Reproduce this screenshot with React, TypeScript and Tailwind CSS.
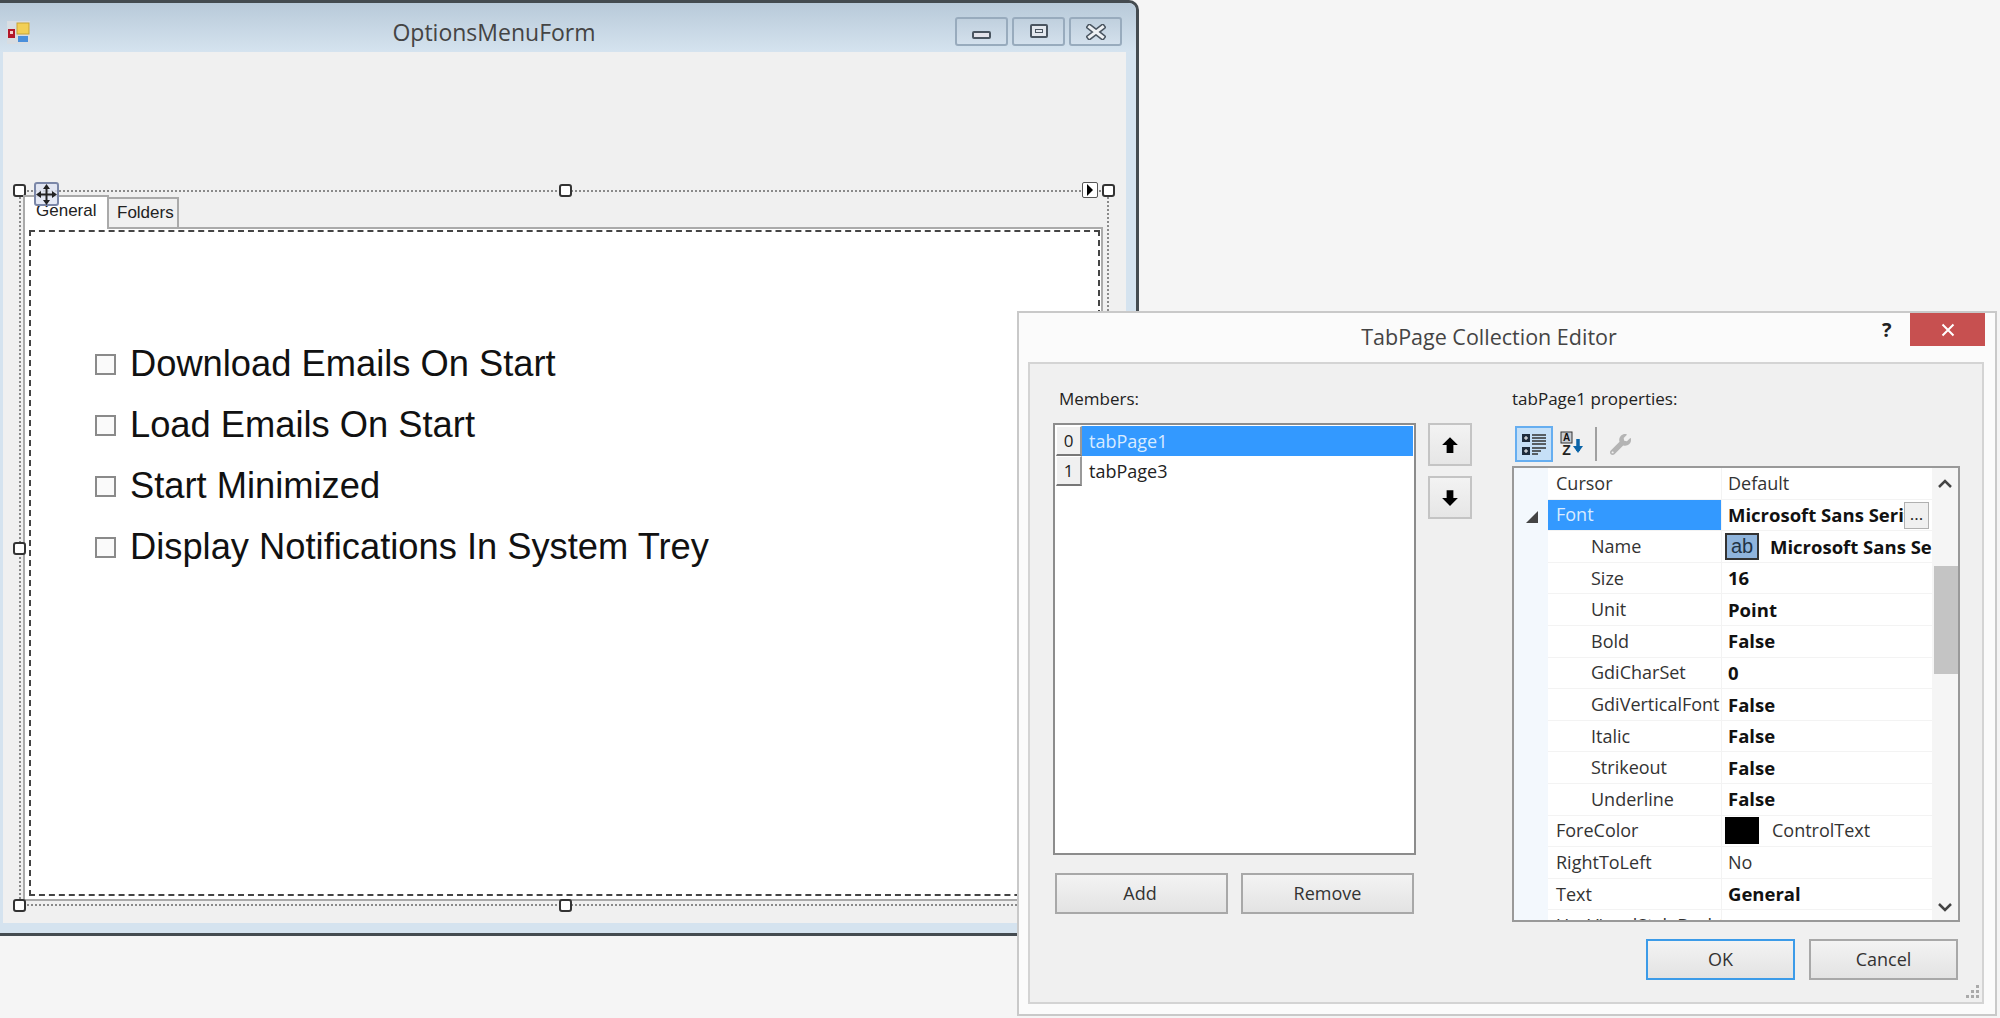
import { FaWrench } from 'react-icons/fa';

const checks = ['Download Emails On Start', 'Load Emails On Start', 'Start Minimized', 'Display Notifications In System Trey'];

type Prop = { name: string; value: string; indent?: boolean; bold?: boolean; selected?: boolean; swatch?: 'ab' | 'black' };

const props: Prop[] = [
  { name: 'Cursor', value: 'Default' },
  { name: 'Font', value: 'Microsoft Sans Serif', bold: true, selected: true },
  { name: 'Name', value: 'Microsoft Sans Serif', indent: true, bold: true, swatch: 'ab' },
  { name: 'Size', value: '16', indent: true, bold: true },
  { name: 'Unit', value: 'Point', indent: true, bold: true },
  { name: 'Bold', value: 'False', indent: true, bold: true },
  { name: 'GdiCharSet', value: '0', indent: true, bold: true },
  { name: 'GdiVerticalFont', value: 'False', indent: true, bold: true },
  { name: 'Italic', value: 'False', indent: true, bold: true },
  { name: 'Strikeout', value: 'False', indent: true, bold: true },
  { name: 'Underline', value: 'False', indent: true, bold: true },
  { name: 'ForeColor', value: 'ControlText', swatch: 'black' },
  { name: 'RightToLeft', value: 'No' },
  { name: 'Text', value: 'General', bold: true },
  { name: 'UseVisualStyleBackColor', value: 'True', bold: true },
];

const Handle = ({ className }: { className: string }) => (
  <div className={`absolute w-[13px] h-[13px] bg-white border-2 border-[#333] rounded-[3px] ${className}`} />
);

const CaptionButton = ({ children }: { children: React.ReactNode }) => (
  <div className="w-[53px] h-[29px] flex items-center justify-center rounded-[3px] border-2 border-[#98abbd] bg-gradient-to-b from-[#c0d0de] to-[#d3e0ec]">
    {children}
  </div>
);

const Checks = () => (
  <div className="flex flex-col pt-[102px] pl-[64px]">
    {checks.map((label) => (
      <div key={label} className="h-[61px] flex items-center gap-[14px]">
        <div className="w-[21px] h-[21px] border-2 border-[#8a8a8a] bg-[#fafafa]" />
        <span className="font-['Liberation_Sans',sans-serif] text-[36.3px] leading-none text-[#111]">{label}</span>
      </div>
    ))}
  </div>
);

const FormWindow = () => (
  <div className="absolute left-0 top-0 w-[1139px] h-[936px] flex flex-col bg-[#d5e3ef] border-t-[3px] border-r-[3px] border-b-[3px] border-[#444b50] rounded-tr-[10px]">
    {/* title bar */}
    <div className="h-[49px] shrink-0 relative flex items-center justify-center bg-gradient-to-b from-[#b8cad9] to-[#d5e3ef] rounded-tr-[8px]">
      <svg className="absolute left-[7px] top-[18px]" width="23" height="23" viewBox="0 0 23 23">
        <rect width="23" height="23" fill="#d8dde2" />
        <rect x="1" y="8" width="7" height="9" fill="#b3182a" />
        <rect x="3" y="10" width="3" height="3" fill="#f4d0d0" />
        <rect x="10" y="2" width="12" height="11" fill="#f2cf55" stroke="#c9a535" />
        <rect x="11" y="15" width="10" height="6" fill="#4a8fdb" />
      </svg>
      <span className="font-['Open_Sans',sans-serif] text-[23px] text-[#444] mr-[148px] mt-[10px]">OptionsMenuForm</span>
      <div className="absolute right-[14px] top-[14px] flex gap-[4px]">
        <CaptionButton>
          <div className="w-[19px] h-[8px] mt-[6px] rounded-[2px] border-2 border-[#4a5560] bg-[#e3e3ea]" />
        </CaptionButton>
        <CaptionButton>
          <div className="w-[18px] h-[14px] -mt-[2px] flex items-center justify-center rounded-[2px] border-2 border-[#4a5560] bg-[#e3e8ee]">
            <div className="w-[8px] h-[4px] border border-[#4a5560]" />
          </div>
        </CaptionButton>
        <CaptionButton>
          <svg width="20" height="16" viewBox="0 0 20 16">
            <path d="M3.500 3 L16.500 13 M16.500 3 L3.500 13" stroke="#4a5560" strokeWidth="6" strokeLinecap="square" />
            <path d="M3.500 3 L16.500 13 M16.500 3 L3.500 13" stroke="#eef1f4" strokeWidth="3" strokeLinecap="square" />
          </svg>
        </CaptionButton>
      </div>
    </div>
    {/* client area */}
    <div className="ml-[3px] mr-[10px] h-[871px] shrink-0 bg-[#f0f0f0] pl-[16px] pt-[138px]">
      <div className="relative w-[1090px] h-[716px] border-2 border-dotted border-[#8a8a8a]">
        <Handle className="-left-[8px] -top-[8px]" />
        <Handle className="left-[538px] -top-[8px]" />
        <Handle className="-right-[8px] -top-[8px]" />
        <Handle className="-left-[8px] top-[350px]" />
        <Handle className="-left-[8px] -bottom-[8px]" />
        <Handle className="left-[538px] -bottom-[8px]" />
        {/* smart tag */}
        <div className="absolute right-[9px] -top-[10px] w-[16px] h-[16px] flex items-center pl-[4px] bg-white border border-[#555] rounded-[2px] z-10">
          <div className="w-0 h-0 border-y-[6px] border-y-transparent border-l-[6px] border-l-black" />
        </div>
        {/* move glyph */}
        <div className="absolute left-[13px] -top-[10px] w-[25px] h-[24px] flex items-center justify-center bg-[#dfe4f2]/80 border-2 border-[#7b87a8] rounded-[3px] z-10">
          <svg width="21" height="21" viewBox="0 0 21 21" fill="#222">
            <path d="M9.500 4h2v13h-2zM4 9.500h13v2H4z" />
            <path d="M10.500 0l3.500 5H7zM10.500 21L7 16h7zM0 10.500L5 7v7zM21 10.500L16 14V7z" />
          </svg>
        </div>
        <div className="pl-[2px] pt-[1px] flex flex-col h-full">
          <div className="flex items-end h-[34px] font-['Liberation_Sans',sans-serif] text-[17px] text-[#222]">
            <div className="w-[86px] h-[34px] -mb-[2px] z-[1] bg-white border-t-2 border-l-2 border-r-2 border-[#aaa] pl-[11px] pt-[1px]">General</div>
            <div className="w-[70px] h-[30px] bg-[#f0f0f0] border-t-2 border-r-2 border-[#aaa] pl-[8px] pt-[1px]">Folders</div>
          </div>
          <div className="w-[1080px] h-[674px] border-2 border-[#aaa] bg-white pt-[1px] pl-[4px]">
            <div className="w-[1071px] h-[666px] border-2 border-dashed border-[#444] bg-white">
              <Checks />
            </div>
          </div>
        </div>
      </div>
    </div>
  </div>
);

const DlgButton = ({ label, primary }: { label: string; primary?: boolean }) => (
  <div
    className={`w-[149px] h-[41px] flex items-center justify-center border-2 bg-gradient-to-b from-[#f3f3f3] to-[#e3e3e3] text-[18px] text-[#333] ${
      primary ? 'border-[#3c9be8]' : 'border-[#a8a8a8]'
    }`}
  >
    {label}
  </div>
);

const ArrowButton = ({ down }: { down?: boolean }) => (
  <div className="w-[44px] h-[43px] flex items-center justify-center border-2 border-[#c4c4c4] bg-gradient-to-b from-[#f3f3f3] to-[#e6e6e6]">
    <svg width="18" height="18" viewBox="0 0 16 16" className={down ? 'rotate-180' : ''}>
      <path d="M8 1 L15 8 H11 V15 H5 V8 H1 Z" fill="#000" />
    </svg>
  </div>
);

const MemberRow = ({ index, name, selected }: { index: number; name: string; selected?: boolean }) => (
  <div className="flex h-[30px]">
    <div className="w-[26px] h-[30px] flex items-center justify-center bg-[#f0f0f0] border-t border-l border-white border-b-2 border-r-2 border-b-[#777] border-r-[#999] text-[17px] text-[#222]">
      {index}
    </div>
    <div className={`flex-1 flex items-center pl-[7px] text-[18px] ${selected ? 'bg-[#3399ff] text-[#d8ebff]' : 'text-[#222]'}`}>{name}</div>
  </div>
);

const Toolbar = () => (
  <div className="flex items-center h-[36px] mt-[3px] ml-[3px] mb-[4px]">
    <div className="w-[38px] h-[36px] flex items-center justify-center bg-[#c6e0f7] border-2 border-[#66aef0]">
      <svg width="26" height="24" viewBox="0 0 26 24">
        <rect x="1" y="2" width="8" height="8" fill="#1e2c3c" />
        <path d="M3 6h4M5 4v4" stroke="#fff" />
        <rect x="1" y="15" width="8" height="8" fill="#1e2c3c" />
        <path d="M3 19h4M5 17v4" stroke="#fff" />
        <path d="M11 3h14M11 6h14M11 9h14M11 12h14M11 16h14M11 19h9M11 22h6" stroke="#333" strokeWidth="1.500" />
      </svg>
    </div>
    <div className="w-[38px] h-[36px] flex items-center justify-center">
      <svg width="26" height="26" viewBox="0 0 26 26">
        <rect x="2" y="1" width="11" height="11" fill="#c8ccd2" stroke="#333" />
        <text x="7.500" y="10" fontSize="10" fontWeight="700" fontFamily="Liberation Sans" textAnchor="middle" fill="#111">A</text>
        <text x="7.500" y="24" fontSize="14" fontWeight="700" fontFamily="Liberation Sans" textAnchor="middle" fill="#222">Z</text>
        <path d="M19 8v12" stroke="#0a64a8" strokeWidth="3.500" />
        <path d="M14 15l5 7 5-7z" fill="#0a64a8" />
      </svg>
    </div>
    <div className="w-[2px] h-[34px] bg-[#a0a0a0] ml-[4px] mr-[13px]" />
    <FaWrench className="text-[#b4b4b4]" size={21} />
  </div>
);

const Grid = () => (
  <div className="relative w-[448px] h-[456px] border-2 border-[#999] bg-white flex overflow-hidden">
    <div className="w-[34px] shrink-0 bg-[#f3f8fd] relative">
      <div className="absolute left-[12px] top-[43px] w-0 h-0 border-b-[12px] border-b-[#444] border-l-[12px] border-l-transparent" />
    </div>
    <div className="w-[384px] shrink-0 flex flex-col">
      {props.map((p) => (
        <div key={p.name} className="h-[31.6px] shrink-0 flex border-b border-[#f3f3f3]">
          <div
            className={`w-[173px] shrink-0 overflow-hidden whitespace-nowrap flex items-center text-[18px] ${p.indent ? 'pl-[43px]' : 'pl-[8px]'} ${
              p.selected ? 'bg-[#3399ff] text-[#d8ebff]' : 'text-[#333]'
            }`}
          >
            {p.name}
          </div>
          <div className="flex-1 min-w-0 relative flex items-center pl-[6px] overflow-hidden whitespace-nowrap border-l border-[#f3f3f3] text-[18.5px]">
            {p.swatch === 'ab' && (
              <div className="w-[34px] h-[27px] mr-[11px] -ml-[3px] shrink-0 flex items-center justify-center bg-[#8fb4dc] border-2 border-[#333] text-[#234] font-['Liberation_Sans',sans-serif] text-[20px]">
                ab
              </div>
            )}
            {p.swatch === 'black' && <div className="w-[34px] h-[27px] mr-[13px] -ml-[3px] shrink-0 bg-black" />}
            <span className={p.bold ? 'font-bold text-[#111]' : 'text-[#333] text-[18px]'}>{p.value}</span>
            {p.selected && (
              <div className="absolute right-[3px] top-[2px] w-[25px] h-[27px] pb-[2px] flex items-center justify-center bg-[#f0f0f0] border border-[#b0b0b0] text-[#222] text-[17px]">
                ...
              </div>
            )}
          </div>
        </div>
      ))}
    </div>
    {/* scrollbar */}
    <div className="w-[26px] shrink-0 bg-[#f5f5f5] flex flex-col justify-between items-center pt-[11px] pb-[8px]">
      <svg width="14" height="10" viewBox="0 0 14 10"><path d="M1 8l6-6 6 6" fill="none" stroke="#444" strokeWidth="2.500" /></svg>
      <svg width="14" height="10" viewBox="0 0 14 10"><path d="M1 2l6 6 6-6" fill="none" stroke="#444" strokeWidth="2.500" /></svg>
    </div>
    <div className="absolute right-0 top-[98px] w-[24px] h-[108px] bg-[#c4c4c4]" />
  </div>
);

const Dialog = () => (
  <div className="absolute left-[1017px] top-[311px] w-[980px] h-[705px] bg-[#fbfbfb] border-2 border-[#c9c9c9] flex flex-col font-['Open_Sans',sans-serif]">
    <div className="h-[49px] shrink-0 relative flex items-center justify-center text-[21.500px] text-[#444]">
      <span className="mr-[36px]">TabPage Collection Editor</span>
      <span className="absolute left-[863px] top-[2px] text-[20px] font-bold text-[#222]">?</span>
      <div className="absolute left-[891px] top-0 w-[75px] h-[33px] bg-[#c75050] flex items-center justify-center">
        <svg width="14" height="14" viewBox="0 0 14 14"><path d="M1.500 1.500l11 11M12.500 1.500l-11 11" stroke="#fff" strokeWidth="2" /></svg>
      </div>
    </div>
    <div className="ml-[9px] w-[956px] h-[642px] bg-[#f0f0f0] border-t-2 border-r-2 border-b-2 border-[#d4d4d4] border-l-2 relative flex">
      {/* members column */}
      <div className="w-[457px] shrink-0 pl-[23px] pt-[23px] flex flex-col">
        <div className="text-[17px] leading-[24px] pl-[6px] mb-[12px] text-[#222]">Members:</div>
        <div className="flex gap-[12px]">
          <div className="w-[363px] h-[432px] border-2 border-[#8c8c8c] bg-white pt-[1px] pl-[1px] pr-[1px]">
            <MemberRow index={0} name="tabPage1" selected />
            <MemberRow index={1} name="tabPage3" />
          </div>
          <div className="flex flex-col gap-[10px]">
            <ArrowButton />
            <ArrowButton down />
          </div>
        </div>
        <div className="flex gap-[13px] mt-[18px] pl-[2px]">
          <div className="w-[173px] h-[41px] pr-[3px] flex items-center justify-center border-2 border-[#a8a8a8] bg-gradient-to-b from-[#f3f3f3] to-[#e3e3e3] text-[18px] text-[#333]">Add</div>
          <div className="w-[173px] h-[41px] flex items-center justify-center border-2 border-[#a8a8a8] bg-gradient-to-b from-[#f3f3f3] to-[#e3e3e3] text-[18px] text-[#333]">Remove</div>
        </div>
      </div>
      {/* properties column */}
      <div className="pl-[25px] pt-[23px] flex flex-col">
        <div className="text-[17px] leading-[24px] mb-[12px] text-[#222]">tabPage1 properties:</div>
        <Toolbar />
        <Grid />
        <div className="flex gap-[14px] mt-[17px] ml-[134px]">
          <DlgButton label="OK" primary />
          <DlgButton label="Cancel" />
        </div>
      </div>
      {/* size grip */}
      <svg className="absolute right-[2px] bottom-[2px]" width="16" height="16" viewBox="0 0 16 16" fill="#aaa">
        <rect x="12" y="1" width="3" height="3" /><rect x="12" y="6" width="3" height="3" /><rect x="7" y="6" width="3" height="3" />
        <rect x="12" y="11" width="3" height="3" /><rect x="7" y="11" width="3" height="3" /><rect x="2" y="11" width="3" height="3" />
      </svg>
    </div>
  </div>
);

export default function App() {
  return (
    <div className="relative w-[2000px] h-[1018px] overflow-hidden bg-[#f5f5f5]">
      <FormWindow />
      <Dialog />
    </div>
  );
}
